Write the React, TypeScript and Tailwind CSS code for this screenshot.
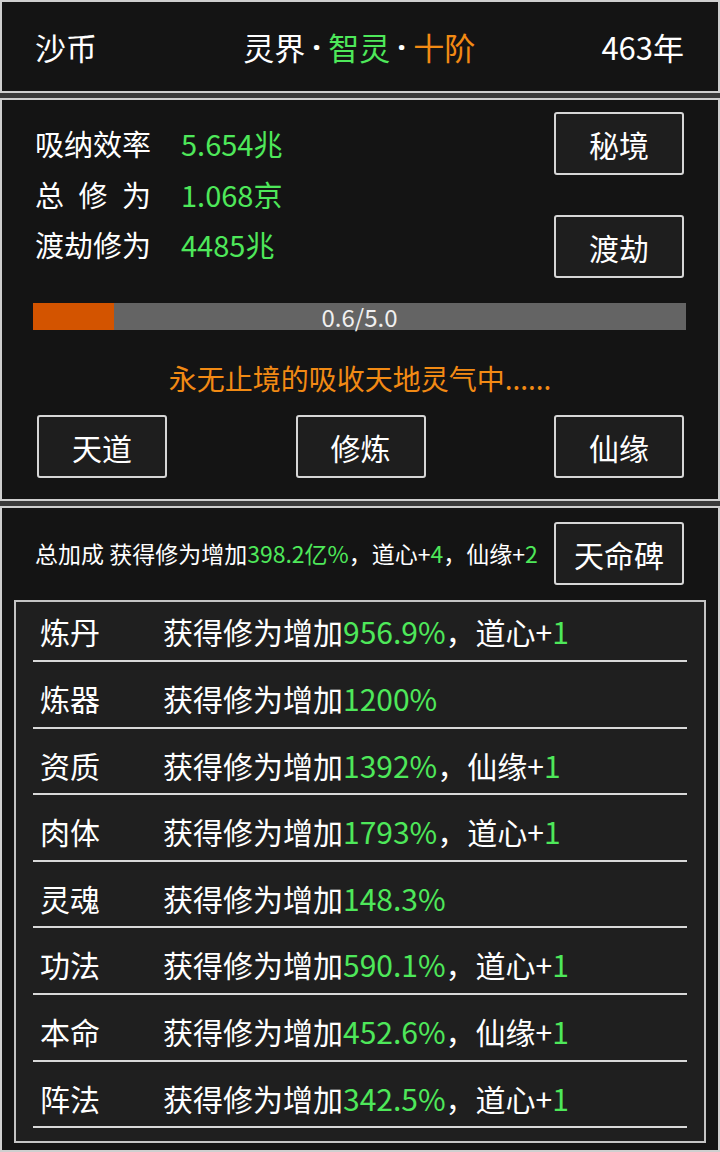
const GREEN = 'text-[#4ee85a]';

const ROWS: { name: string; value: string; extra?: [string, string] }[] = [
  { name: '炼丹', value: '956.9%', extra: ['道心', '1'] },
  { name: '炼器', value: '1200%' },
  { name: '资质', value: '1392%', extra: ['仙缘', '1'] },
  { name: '肉体', value: '1793%', extra: ['道心', '1'] },
  { name: '灵魂', value: '148.3%' },
  { name: '功法', value: '590.1%', extra: ['道心', '1'] },
  { name: '本命', value: '452.6%', extra: ['仙缘', '1'] },
  { name: '阵法', value: '342.5%', extra: ['道心', '1'] },
];

function Btn({ label }: { label: string }) {
  return (
    <button className="w-[130px] h-[63px] border-2 border-[#d6d6d6] rounded-[3px] bg-[#1e1e1e] text-white text-[30px] leading-none">
      {label}
    </button>
  );
}

function Dot() {
  return <span className="inline-block w-[23px] text-center font-['Noto_Sans',sans-serif] font-bold">·</span>;
}

export default function App() {
  return (
    <div
      className="w-[720px] h-[1152px] bg-[#3a3a3a] flex flex-col gap-[5px] text-white overflow-hidden"
      style={{ fontFamily: '"Noto Sans CJK SC", "Noto Sans", sans-serif' }}
    >
      {/* 顶栏 */}
      <div className="h-[93px] shrink-0 border-2 border-[#cfcfcf] bg-[#141414] pl-[33px] pr-[34px] flex items-center justify-between text-[31px] leading-none">
        <span>沙币</span>
        <span className="pl-[20px] flex items-center">
          灵界
          <Dot />
          <span className={GREEN}>智灵</span>
          <Dot />
          <span className="text-[#f28a14]">十阶</span>
        </span>
        <span>463年</span>
      </div>

      {/* 修炼面板 */}
      <div className="h-[403px] shrink-0 border-2 border-[#cfcfcf] bg-[#141414] px-[33px] pt-[12px]">
        <div className="flex justify-between items-start">
          <div className="mt-[6px] text-[29px] leading-[50.5px]">
            <div className="flex">
              <span className="w-[146px]">吸纳效率</span>
              <span className={GREEN}>5.654兆</span>
            </div>
            <div className="flex">
              <span className="w-[146px] flex justify-between pr-[30px]">
                <span>总</span>
                <span>修</span>
                <span>为</span>
              </span>
              <span className={GREEN}>1.068京</span>
            </div>
            <div className="flex">
              <span className="w-[146px]">渡劫修为</span>
              <span className={GREEN}>4485兆</span>
            </div>
          </div>
          <div className="flex flex-col gap-[40px] pr-[1px]">
            <Btn label="秘境" />
            <Btn label="渡劫" />
          </div>
        </div>

        <div className="relative mt-[25px] -ml-[2px] w-[653px] h-[27px] bg-[#646464]">
          <div className="absolute left-0 top-0 h-full w-[81px] bg-[#d35400]" />
          <div className="relative text-center text-[24px] leading-[27px] text-[#f0f0f0]">0.6/5.0</div>
        </div>

        <div className="mt-[28px] text-center text-[28px] leading-[40px] text-[#f28a14]">
          永无止境的吸收天地灵气中......
        </div>

        <div className="mt-[17px] flex justify-between pl-[2px] pr-[1px]">
          <Btn label="天道" />
          <Btn label="修炼" />
          <Btn label="仙缘" />
        </div>
      </div>

      {/* 加成面板 */}
      <div className="flex-1 border-2 border-[#cfcfcf] bg-[#141414] pt-[14px]">
        <div className="px-[33px] flex items-center justify-between">
          <div className="text-[23px] leading-none">
            总加成 获得修为增加<span className={GREEN}>398.2亿%</span>，道心+<span className={GREEN}>4</span>，仙缘+
            <span className={GREEN}>2</span>
          </div>
          <div className="pr-[1px]">
            <Btn label="天命碑" />
          </div>
        </div>

        <div className="mx-[12px] mt-[15px] border-2 border-[#c4c4c4] bg-[#1f1f1f] px-[17px] pb-[13px]">
          {ROWS.map((r) => (
            <div
              key={r.name}
              className="flex border-b-2 border-[#d8d8d8] pt-[18px] pb-[10.6px] first:pt-[11px] first:pb-[11px] text-[30px] leading-[36px] pl-[7px]"
            >
              <span className="w-[123px]">{r.name}</span>
              <span>
                获得修为增加<span className={GREEN}>{r.value}</span>
                {r.extra && (
                  <>
                    ，{r.extra[0]}+<span className={GREEN}>{r.extra[1]}</span>
                  </>
                )}
              </span>
            </div>
          ))}
        </div>
      </div>
    </div>
  );
}
